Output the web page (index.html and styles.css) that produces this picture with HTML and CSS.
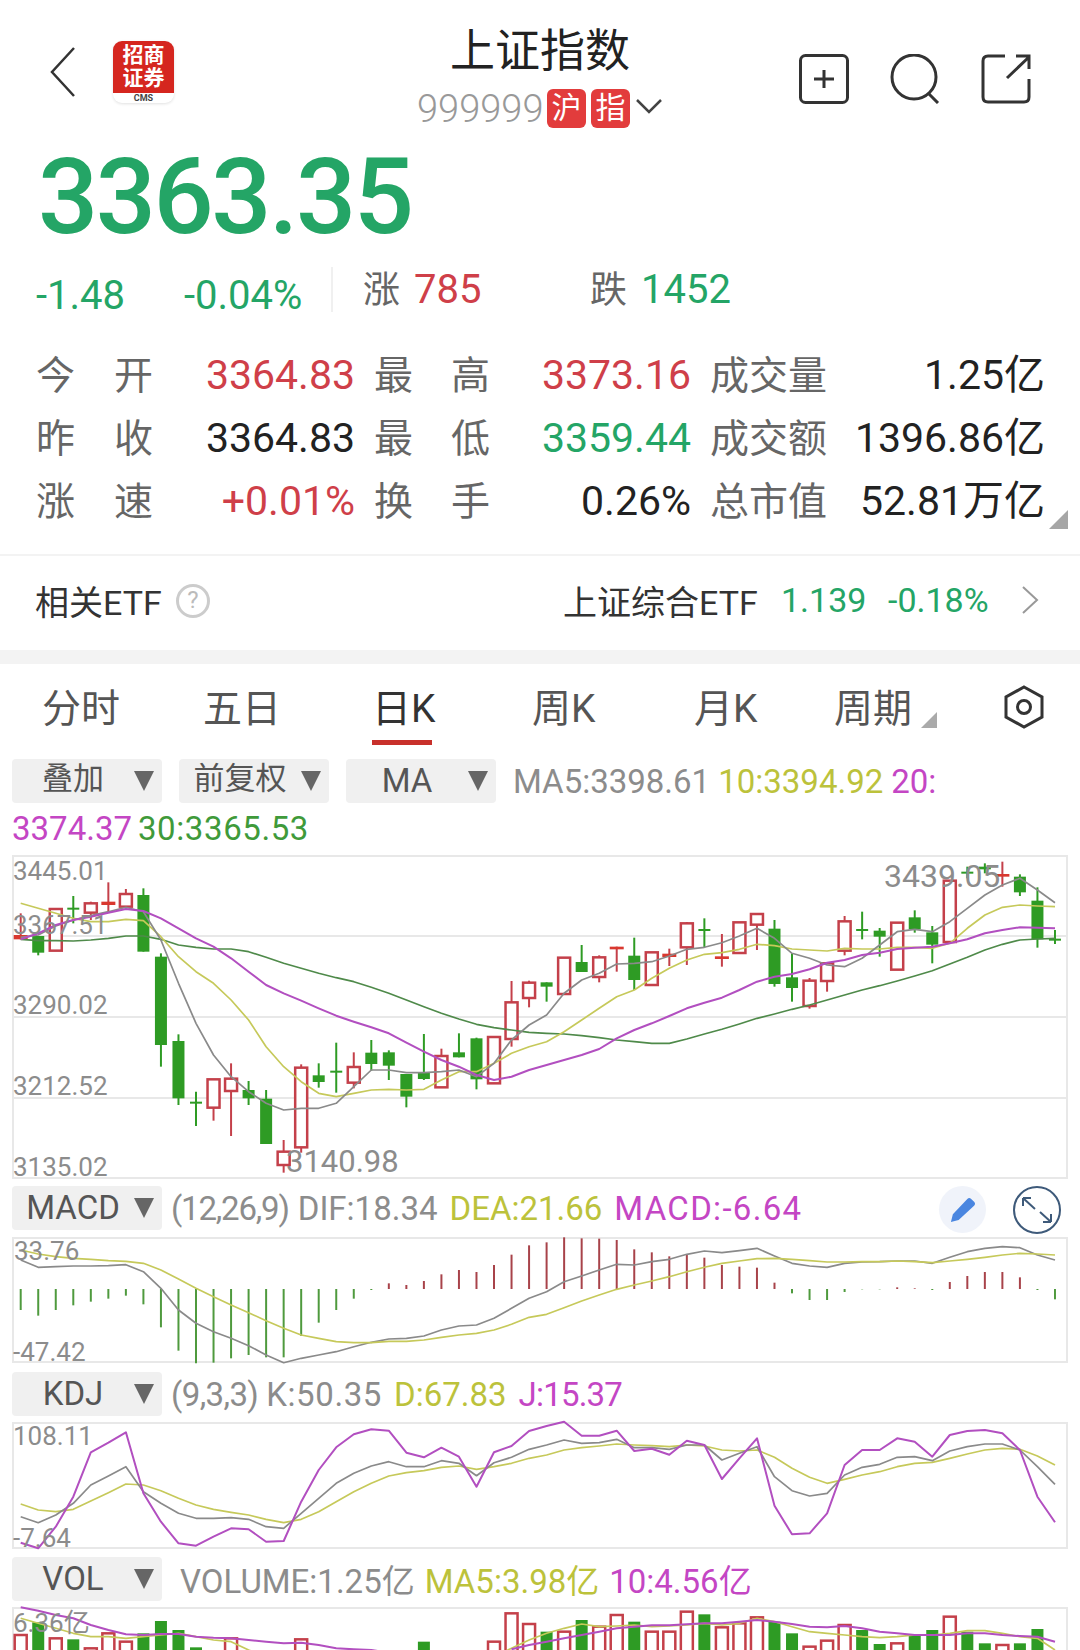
FILE: index.html
```html
<!DOCTYPE html>
<html lang="zh-CN">
<head>
    <meta charset="utf-8">
    <link rel="stylesheet" href="styles.css">
    <title>上证指数</title>
</head>
<body>
    <div class="top">
        <div class="top-left">
            <svg class="ico-back" viewBox="0 0 26 50"><polyline points="24,1 2,25 24,49"/></svg>
            <div class="logo">
                <div class="logo-red"><span>招商</span><span>证券</span></div>
                <div class="logo-cms">CMS</div>
            </div>
        </div>
        <div class="top-mid">
            <h1>上证指数</h1>
            <div class="code">
                <span class="code-num">999999</span>
                <span class="tag">沪</span>
                <span class="tag">指</span>
                <svg class="ico-down" viewBox="0 0 28 16"><polyline points="2,2 14,14 26,2"/></svg>
            </div>
        </div>
        <div class="top-right">
            <svg class="ico" viewBox="0 0 50 50"><rect x="1.5" y="1.5" width="47" height="47" rx="5"/><path d="M15 25H35M25 16V34"/></svg>
            <svg class="ico" viewBox="0 0 50 50"><circle cx="24" cy="23" r="22"/><path d="M39 40L48 49"/></svg>
            <svg class="ico" viewBox="0 0 50 50"><path d="M24 2H7Q2 2 2 7V43Q2 48 7 48H43Q48 48 48 43V25"/><path d="M26 24L48 3M35 2H48V15"/></svg>
        </div>
    </div>

    <div class="price">3363.35</div>

    <div class="change">
        <span class="chg-a green">-1.48</span>
        <span class="chg-b green">-0.04%</span>
        <span class="sep"></span>
        <span class="cnt-k">涨</span>
        <span class="cnt-v red">785</span>
        <span class="cnt-k">跌</span>
        <span class="cnt-v green">1452</span>
    </div>

    <div class="stats">
        <div class="k"><span>今</span><span>开</span></div><div class="v red">3364.83</div>
        <div class="k k-in"><span>最</span><span>高</span></div><div class="v red">3373.16</div>
        <div class="k k-in">成交量</div><div class="v">1.25亿</div>
        <div class="k"><span>昨</span><span>收</span></div><div class="v">3364.83</div>
        <div class="k k-in"><span>最</span><span>低</span></div><div class="v green">3359.44</div>
        <div class="k k-in">成交额</div><div class="v">1396.86亿</div>
        <div class="k"><span>涨</span><span>速</span></div><div class="v red">+0.01%</div>
        <div class="k k-in"><span>换</span><span>手</span></div><div class="v">0.26%</div>
        <div class="k k-in">总市值</div><div class="v">52.81万亿</div>
        <span class="corner"></span>
    </div>

    <div class="etf">
        <span class="etf-name">相关ETF</span>
        <span class="help">?</span>
        <span class="etf-fund">上证综合ETF</span>
        <span class="etf-num green">1.139</span>
        <span class="etf-pct green">-0.18%</span>
        <svg class="ico-next" viewBox="0 0 18 28"><polyline points="2,1 16,14 2,27"/></svg>
    </div>

    <div class="band"></div>

    <div class="tabs">
        <span class="tab t1">分时</span>
        <span class="tab t2">五日</span>
        <span class="tab t3 on">日K</span>
        <span class="tab t4">周K</span>
        <span class="tab t5">月K</span>
        <span class="tab t6">周期<i class="tri-corner"></i></span>
        <svg class="ico-hex" viewBox="0 0 40 44"><polygon points="20,2 38,12 38,32 20,42 2,32 2,12"/><circle cx="20" cy="22" r="6.5"/></svg>
    </div>

    <div class="bar bar-ma">
        <span class="chip"><b class="cjk">叠加</b><i></i></span>
        <span class="chip"><b class="cjk">前复权</b><i></i></span>
        <span class="chip"><b>MA</b><i></i></span>
        <span class="lg c-gray">MA5:3398.61</span>
        <span class="lg c-yel">10:3394.92</span>
        <span class="lg c-pur">20:</span>
    </div>
    <div class="lg-line">
        <span class="lg c-pur">3374.37</span>
        <span class="lg c-grn wide">30:3365.53</span>
    </div>

    <div class="panel p-main">
        <svg id="main" viewBox="14 857 1052 320">
            <text class="lb" x="13" y="880">3445.01</text>
            <text class="lb" x="13" y="934">3367.51</text>
            <text class="lb" x="13" y="1014">3290.02</text>
            <text class="lb" x="13" y="1095">3212.52</text>
            <text class="lb" x="13" y="1176">3135.02</text>
            <text class="lb lb-low" x="286" y="1172">3140.98</text>
            <text class="lb lb-big" x="884" y="887">3439.05</text>
        </svg>
    </div>

    <div class="bar bar-macd">
        <span class="chip"><b>MACD</b><i></i></span>
        <span class="lg c-gray par">(12,26,9)</span>
        <span class="lg c-gray">DIF:18.34</span>
        <span class="lg c-yel">DEA:21.66</span>
        <span class="lg c-pur wider">MACD:-6.64</span>
        <span class="pen">
            <svg viewBox="0 0 28 28"><path d="M2 27L4 19L19 3Q21 1 23 3L26 6Q28 8 26 10L10 25Z"/></svg>
        </span>
        <svg class="ico-expand" viewBox="0 0 48 48"><circle cx="24" cy="24" r="23"/><path d="M10 12L22 23M10 12H18M10 12V20M38 36L27 26M38 36H30M38 36V28"/></svg>
    </div>

    <div class="panel p-macd">
        <svg id="macd" viewBox="14 1239 1052 122">
            <text class="lb" x="14" y="1260">33.76</text>
            <text class="lb" x="13" y="1361">-47.42</text>
        </svg>
    </div>

    <div class="bar bar-kdj">
        <span class="chip"><b>KDJ</b><i></i></span>
        <span class="lg c-gray par-s">(9,3,3)</span>
        <span class="lg c-gray wide">K:50.35</span>
        <span class="lg c-yel">D:67.83</span>
        <span class="lg c-pur tight">J:15.37</span>
    </div>

    <div class="panel p-kdj">
        <svg id="kdj" viewBox="14 1424 1052 123">
            <text class="lb" x="13" y="1445">108.11</text>
            <text class="lb" x="13" y="1547">-7.64</text>
        </svg>
    </div>

    <div class="bar bar-vol">
        <span class="chip"><b>VOL</b><i></i></span>
        <span class="lg c-gray">VOLUME:1.25亿</span>
        <span class="lg c-yel">MA5:3.98亿</span>
        <span class="lg c-pur">10:4.56亿</span>
    </div>

    <div class="panel p-vol">
        <svg id="vol" viewBox="14 1609 1052 60">
            <text class="lb" x="13" y="1632">6.36亿</text>
        </svg>
    </div>

    <script src="chart.js"></script>
</body>
</html>
```

FILE: styles.css
```css
* {
    margin: 0;
    padding: 0;
    box-sizing: border-box;
}
body {
    width: 1080px;
    height: 1650px;
    overflow: hidden;
    background-color: #fff;
    color: #222;
    font-family: Roboto, "Noto Sans CJK SC", sans-serif;
}
.red { color: #cf3f49; }
.green { color: #24a566; }

/* header */
.top {
    display: grid;
    grid-template-columns: 1fr auto 1fr;
    align-items: center;
    height: 135px;
    padding-top: 28px;
    padding-bottom: 6px;
}
.top-left {
    display: flex;
    align-items: center;
    gap: 37px;
    padding-left: 50px;
    padding-bottom: 13px;
}
.ico-back {
    width: 26px;
    height: 50px;
    fill: none;
    stroke: #333;
    stroke-width: 2.5;
}
.logo {
    width: 61px;
    height: 62px;
    border-radius: 9px;
    overflow: hidden;
    box-shadow: 0 1px 3px rgba(0, 0, 0, 0.12);
}
.logo-red {
    display: flex;
    flex-direction: column;
    align-items: center;
    justify-content: center;
    height: 52px;
    background-color: #d5261f;
    color: #fff;
    font-size: 21px;
    font-weight: 700;
    line-height: 23px;
}
.logo-cms {
    color: #444;
    font-size: 9px;
    font-weight: 700;
    line-height: 10px;
    text-align: center;
}
.top-mid h1 {
    font-size: 45px;
    font-weight: 400;
    line-height: 46px;
    color: #222;
    text-align: center;
}
.code {
    display: flex;
    align-items: center;
    margin-top: 14px;
    height: 39px;
}
.code-num {
    width: 130px;
    color: #999;
    font-size: 38px;
    font-weight: 300;
}
.tag {
    width: 39px;
    height: 39px;
    margin-right: 5px;
    border-radius: 6px;
    background-color: #e23c3c;
    color: #fff;
    font-size: 30px;
    line-height: 38px;
    text-align: center;
}
.ico-down {
    width: 28px;
    height: 16px;
    margin-bottom: 5px;
    fill: none;
    stroke: #444;
    stroke-width: 2.5;
}
.top-right {
    display: flex;
    justify-content: flex-end;
    gap: 41px;
    padding-right: 49px;
    padding-top: 1px;
}
.ico {
    width: 50px;
    height: 50px;
    fill: none;
    stroke: #333;
    stroke-width: 3;
}

/* quote */
.price {
    height: 125px;
    padding-top: 9px;
    padding-left: 38px;
    color: #24a566;
    font-size: 106px;
    font-weight: 500;
    line-height: 106px;
    letter-spacing: -2.5px;
}
.change {
    display: flex;
    align-items: center;
    height: 50px;
    margin-top: 4px;
    padding-left: 36px;
    font-size: 40px;
}
.chg-a { width: 148px; padding-top: 13px; }
.chg-b { width: 147px; padding-top: 13px; }
.sep {
    width: 2px;
    height: 45px;
    margin-right: 30px;
    background-color: #f0f0f0;
}
.cnt-k {
    width: 51px;
    margin-bottom: 4px;
    color: #666;
    font-size: 37px;
}
.cnt-v { width: 176px; }

.stats {
    display: grid;
    position: relative;
    grid-template-columns: 117px 202px 135px 201px 137px 217px;
    grid-auto-rows: 63px;
    align-items: center;
    height: 216px;
    margin-top: 26px;
    padding-left: 36px;
    border-bottom: 2px solid #f3f3f3;
    font-size: 41px;
}
.stats .k {
    display: flex;
    justify-content: space-between;
    color: #666;
    font-size: 39px;
    white-space: nowrap;
}
.stats .k-in { padding-left: 19px; }
.stats .v {
    padding-top: 6px;
    line-height: 46px;
    text-align: right;
}
.corner {
    position: absolute;
    right: 12px;
    bottom: 25px;
    border-left: 19px solid transparent;
    border-bottom: 19px solid #a6a6a6;
}

.etf {
    display: flex;
    align-items: center;
    height: 94px;
    padding-left: 35px;
    padding-bottom: 6px;
    font-size: 34px;
    color: #333;
}
.etf-name { width: 141px; }
.help {
    width: 34px;
    height: 34px;
    margin-top: 2px;
    border: 3px solid #ccc;
    border-radius: 50%;
    color: #bbb;
    font-size: 24px;
    line-height: 27px;
    text-align: center;
}
.etf-fund { margin-left: 353px; width: 218px; }
.etf-num { width: 107px; }
.etf-pct { width: 133px; }
.ico-next {
    width: 18px;
    height: 28px;
    fill: none;
    stroke: #999;
    stroke-width: 2;
}
.band {
    height: 14px;
    background-color: #f3f3f3;
}

/* period tabs */
.tabs {
    position: relative;
    height: 86px;
    font-size: 39px;
    color: #555;
}
.tab {
    position: absolute;
    top: 22px;
    line-height: 46px;
}
.t1 { left: 42px; }
.t2 { left: 203px; }
.t3 { left: 372px; color: #333; }
.t4 { left: 532px; }
.t5 { left: 694px; }
.t6 { left: 834px; }
.on::after {
    content: "";
    position: absolute;
    left: 0;
    right: 3px;
    top: 54px;
    height: 5px;
    background-color: #c8302b;
}
.tri-corner {
    position: absolute;
    right: -25px;
    bottom: 4px;
    border-left: 16px solid transparent;
    border-bottom: 16px solid #aaa;
}
.ico-hex {
    position: absolute;
    left: 1004px;
    top: 21px;
    width: 40px;
    height: 44px;
    fill: none;
    stroke: #333;
    stroke-width: 3;
}

/* indicator bars */
.bar {
    display: flex;
    align-items: center;
    height: 44px;
    padding-left: 12px;
    font-size: 33px;
}
.bar-ma { margin-top: 9px; }
.bar-macd { margin-top: 7px; position: relative; }
.bar-kdj { margin-top: 9px; }
.bar-vol { margin-top: 8px; }
.chip {
    display: flex;
    align-items: center;
    width: 150px;
    height: 44px;
    flex-shrink: 0;
    border-radius: 4px;
    background-color: #f0f0f0;
    color: #555;
}
.chip b {
    flex: 1;
    font-weight: 400;
    font-size: 33px;
    line-height: 44px;
    text-align: center;
}
.chip .cjk { font-size: 31px; margin-top: -4px; }
.chip i {
    width: 0;
    margin-right: 8px;
    border-left: 10px solid transparent;
    border-right: 10px solid transparent;
    border-top: 20px solid #666;
}
.bar-ma .chip { margin-right: 17px; }
.bar-macd .chip, .bar-kdj .chip { margin-right: 9px; }
.bar-vol .chip { margin-right: 18px; }
.lg {
    margin-right: 12px;
    font-size: 33px;
    white-space: nowrap;
}
.bar-ma .lg { margin-right: 8px; }
.bar-vol .lg { margin-right: 10px; }
.bar .par { letter-spacing: -1.2px; margin-right: 9px; }
.bar .par-s { letter-spacing: -0.6px; margin-right: 8px; }
.wide { letter-spacing: 0.6px; }
.wider { letter-spacing: 1.3px; }
.tight { letter-spacing: -0.8px; }
.c-gray { color: #8c8c8c; }
.c-yel { color: #bcc23b; }
.c-pur { color: #c446c4; }
.c-grn { color: #3f9a3a; }
.lg-line {
    height: 44px;
    margin-top: 4px;
    padding-left: 12px;
    line-height: 44px;
}
.lg-line .lg { margin-right: 2px; }
.pen {
    position: absolute;
    left: 939px;
    top: 0;
    display: flex;
    align-items: center;
    justify-content: center;
    width: 47px;
    height: 47px;
    border-radius: 50%;
    background-color: #f0f3fa;
}
.pen svg {
    width: 27px;
    height: 27px;
    fill: #4a86e0;
}
.ico-expand {
    position: absolute;
    left: 1013px;
    top: 0;
    width: 48px;
    height: 48px;
    fill: none;
    stroke: #3e5a7a;
    stroke-width: 2;
}

/* chart panels */
.panel {
    width: 1056px;
    margin-left: 12px;
    border: 2px solid #e8e8e8;
}
.panel svg {
    display: block;
    width: 100%;
    height: 100%;
    overflow: visible;
}
.p-main { height: 324px; margin-top: 4px; }
.p-macd { height: 126px; margin-top: 7px; }
.p-kdj { height: 127px; margin-top: 6px; }
.p-vol { height: 64px; margin-top: 6px; }
.lb {
    fill: #8c8c8c;
    font-size: 26px;
}
.lb-low { font-size: 31px; }
.lb-big { font-size: 32px; }
```

FILE: chart.js
```js
var NS = 'http://www.w3.org/2000/svg';
var RED = '#c4404a';
var GREEN = '#2e9b24';
var C_GRAY = '#8a8a8a', C_YEL = '#c6c95a', C_PUR = '#b24fc0', C_GRN = '#4f8a4a';

function xAt(i) {
    return 20.7 + 17.53 * i;
}

function el(parent, name, attrs) {
    var e = document.createElementNS(NS, name);
    for (var k in attrs) e.setAttribute(k, attrs[k]);
    parent.appendChild(e);
    return e;
}

function layer(id) {
    var svg = document.getElementById(id);
    var g = document.createElementNS(NS, 'g');
    svg.insertBefore(g, svg.firstChild);
    return g;
}

// values are stored in thirds of a pixel, counted from the top of the strip
function line(g, vals, base, color, width) {
    var pts = [];
    for (var i = 0; i < vals.length; i++) {
        if (vals[i] != null) pts.push(xAt(i).toFixed(1) + ',' + (base + vals[i] / 3).toFixed(1));
    }
    el(g, 'polyline', { points: pts.join(' '), fill: 'none', stroke: color, 'stroke-width': width || 1.7, 'stroke-linejoin': 'round' });
}

function gridY(g, y) {
    el(g, 'line', { x1: 12, x2: 1068, y1: y, y2: y, stroke: '#e8e8e8', 'stroke-width': 2 });
}

// body top, body bottom, wick top, wick bottom
var candles = [
    [255,268,190,268,'r'],[258,308,258,316,'g'],[177,302,177,302,'r'],[173,178,138,220,'g'],[160,188,155,210,'r'],
    [155,165,97,185,'r'],[132,170,117,175,'r'],[135,305,115,305,'g'],[320,585,310,650,'g'],[573,745,553,765,'g'],
    [755,760,725,828,'g'],[688,773,688,812,'r'],[686,723,640,858,'r'],[720,745,693,765,'g'],[746,882,720,882,'g'],
    [905,945,870,968,'r'],[653,892,643,908,'r'],[676,696,640,713,'g'],[662,667,578,728,'g'],[651,698,607,715,'r'],
    [608,642,570,662,'g'],[607,647,601,690,'g'],[672,740,672,772,'g'],[668,687,552,690,'g'],[618,712,596,712,'r'],
    [607,622,550,622,'g'],[565,688,563,718,'g'],[561,700,561,700,'r'],[457,567,393,590,'r'],[398,444,392,472,'r'],
    [397,410,397,455,'g'],[323,432,323,432,'r'],[336,366,285,366,'g'],[322,381,316,397,'r'],[290,298,290,365,'r'],
    [317,390,263,420,'g'],[307,405,307,405,'r'],[311,321,296,348,'r'],[220,292,216,345,'r'],[237,240,205,292,'g'],
    [319,327,252,350,'r'],[217,309,217,309,'r'],[192,224,192,300,'r'],[236,402,210,410,'g'],[382,414,310,455,'g'],
    [392,468,384,476,'r'],[340,393,340,425,'r'],[214,302,198,316,'r'],[237,240,185,268,'g'],[242,260,234,320,'g'],
    [218,359,218,359,'r'],[202,238,181,248,'g'],[247,284,228,340,'g'],[92,276,92,276,'r'],[65,70,50,85,'g'],
    [50,58,40,70,'g'],[72,80,35,110,'r'],[80,127,73,138,'g'],[152,268,112,293,'g'],[266,270,240,282,'g']
];
var ma5 = [262,255,228,210,197,185,172,185,270,400,520,615,680,725,760,780,775,775,760,710,660,660,668,668,665,660,680,640,570,525,
    495,430,390,370,342,340,335,318,298,292,278,258,235,265,310,325,345,350,325,285,245,238,245,215,175,135,105,85,120,158];
var ma10 = [160,175,190,205,215,215,208,212,260,320,365,400,450,510,590,650,695,730,740,730,720,718,720,718,690,665,665,640,610,590,
    575,545,510,475,440,420,385,355,330,313,308,298,283,287,297,300,303,295,297,297,292,292,295,280,235,195,172,165,168,170];
var ma20 = [268,250,225,210,200,188,177,183,205,235,265,290,325,365,405,430,452,475,497,515,532,550,578,605,630,650,675,690,680,660,
    645,630,615,597,565,540,520,498,475,458,443,420,395,380,372,358,338,330,315,308,297,293,290,280,268,250,240,232,233,235];
var ma30 = [268,272,272,273,270,265,258,258,268,285,292,297,297,305,322,340,355,370,383,395,412,430,450,470,490,507,523,533,540,547,
    550,552,557,563,570,575,580,580,567,552,538,522,505,492,478,465,450,435,420,407,393,378,362,342,322,300,283,270,267,265];

function drawMain() {
    var g = layer('main'), base = 850;
    gridY(g, 936); gridY(g, 1017); gridY(g, 1098);
    candles.forEach(function (c, i) {
        var x = xAt(i), top = base + c[0] / 3, bot = base + c[1] / 3;
        var col = c[4] == 'r' ? RED : GREEN;
        el(g, 'line', { x1: x, x2: x, y1: base + c[2] / 3, y2: base + c[3] / 3, stroke: col, 'stroke-width': 2 });
        if (c[4] == 'g') {
            el(g, 'rect', { x: x - 6, y: top, width: 12, height: Math.max(bot - top, 2), fill: col });
        } else if (bot - top < 5) {
            el(g, 'rect', { x: x - 7, y: top, width: 14, height: bot - top, fill: '#d9382f' });
        } else {
            el(g, 'rect', { x: x - 6, y: top, width: 12, height: bot - top, fill: '#fff', stroke: col, 'stroke-width': 2.5 });
        }
    });
    line(g, ma30, base, C_GRN);
    line(g, ma10, base, C_YEL);
    line(g, ma5, base, C_GRAY);
    line(g, ma20, base, C_PUR, 2);
}

var macdBars = [390,407,390,376,365,356,347,373,442,512,550,548,535,525,532,532,468,428,390,356,330,310,315,303,283,270,276,255,224,196,
    187,172,175,176,180,208,217,229,223,233,255,260,263,308,340,360,360,336,328,328,322,325,330,306,288,276,276,292,330,358];
var dif = [240,262,260,258,258,257,254,275,325,390,430,455,475,497,525,548,535,525,515,500,487,477,475,468,450,438,435,415,385,355,
    335,305,288,270,253,255,245,238,223,213,218,212,205,228,250,258,262,250,246,245,243,243,250,232,215,205,200,203,225,240];
var dea = [210,222,230,235,238,242,244,250,270,297,325,350,375,398,422,445,465,475,485,488,488,484,484,480,472,465,460,450,433,412,
    403,383,363,345,328,315,303,290,275,262,250,243,236,235,238,242,246,246,245,245,243,245,248,243,238,232,225,220,222,225];

function drawMacd() {
    var g = layer('macd'), base = 1180, zero = 327;
    macdBars.forEach(function (v, i) {
        var x = xAt(i);
        el(g, 'line', { x1: x, x2: x, y1: base + zero / 3, y2: base + v / 3, stroke: v > zero ? '#4f9a3e' : '#a8434a', 'stroke-width': 2 });
    });
    line(g, dif, base, C_GRAY);
    line(g, dea, base, C_YEL);
}

var kVals = [440,458,435,400,345,318,290,365,400,430,445,445,443,448,470,475,430,385,340,310,288,275,290,290,272,280,317,278,262,238,
    225,210,220,218,208,233,233,238,225,225,270,250,230,320,362,378,370,315,292,283,262,260,272,243,230,222,222,240,290,343];
var dVals = [402,420,425,418,393,368,342,345,362,385,405,418,427,435,448,458,448,425,395,365,340,318,308,302,292,288,298,290,280,265,
    255,240,233,228,222,225,227,230,225,228,240,243,240,262,295,322,340,328,315,305,290,280,277,265,252,240,235,238,258,285];
var jVals = [518,535,470,380,247,218,187,370,455,520,527,500,475,478,515,513,395,300,232,193,178,182,248,262,233,260,350,247,228,183,
    168,155,197,197,182,243,236,254,212,225,327,265,205,407,493,490,430,285,240,240,205,215,260,195,183,180,190,240,380,457];

function drawKdj() {
    var g = layer('kdj'), base = 1370;
    line(g, dVals, base, C_YEL);
    line(g, kVals, base, C_GRAY);
    line(g, jVals, base, C_PUR, 2);
}

// bars run off the bottom of the strip; 0 means no bar reaches the visible part
var volTops = [795,757,805,808,835,790,815,790,753,780,832,0,805,0,0,0,808,0,0,0,0,0,0,815,0,0,0,815,730,762,
    785,785,750,770,735,755,785,785,725,733,772,760,742,755,790,830,812,765,780,822,820,795,780,740,785,820,825,820,777,0];
var volKind = 'rgrgrrrgggg-r---r------g---rrr' + 'grgrrgrrrgrrrggrrrggrggrgg' + 'rgg-';
var volMa5 = [745,760,775,790,800,800,805,800,795,790,800,810,815,840,860,null,null,null,null,null,null,null,null,null,null,null,null,860,835,810,
    790,775,762,770,768,765,770,768,765,760,765,760,745,755,770,785,790,795,800,803,800,795,795,790,782,782,790,800,805,840];
var volMa10 = [712,722,735,745,765,780,793,795,792,792,800,803,805,810,815,820,818,825,835,838,840,848,null,null,null,null,null,null,838,825,
    815,805,795,785,775,770,766,766,763,760,760,755,750,755,762,770,772,768,775,785,790,795,795,795,790,790,795,798,800,815];

function splitLine(g, vals, base, color, width) {
    // a moving average may dip below the strip, so draw only the runs that stay in view
    var run = [];
    for (var i = 0; i <= vals.length; i++) {
        if (i < vals.length && vals[i] != null) {
            run[i] = vals[i];
        } else if (run.length) {
            line(g, run, base, color, width);
            run = [];
        }
    }
}

function drawVol() {
    var g = layer('vol'), base = 1370;
    volTops.forEach(function (t, i) {
        if (!t) return;
        var x = xAt(i), y = base + t / 3;
        if (volKind.charAt(i) == 'g') {
            el(g, 'rect', { x: x - 6, y: y, width: 12, height: 90, fill: GREEN });
        } else {
            el(g, 'rect', { x: x - 6, y: y, width: 12, height: 90, fill: '#fff', stroke: RED, 'stroke-width': 2.5 });
        }
    });
    splitLine(g, volMa5, base, C_YEL);
    splitLine(g, volMa10, base, C_PUR, 2);
}

drawMain();
drawMacd();
drawKdj();
drawVol();
```
